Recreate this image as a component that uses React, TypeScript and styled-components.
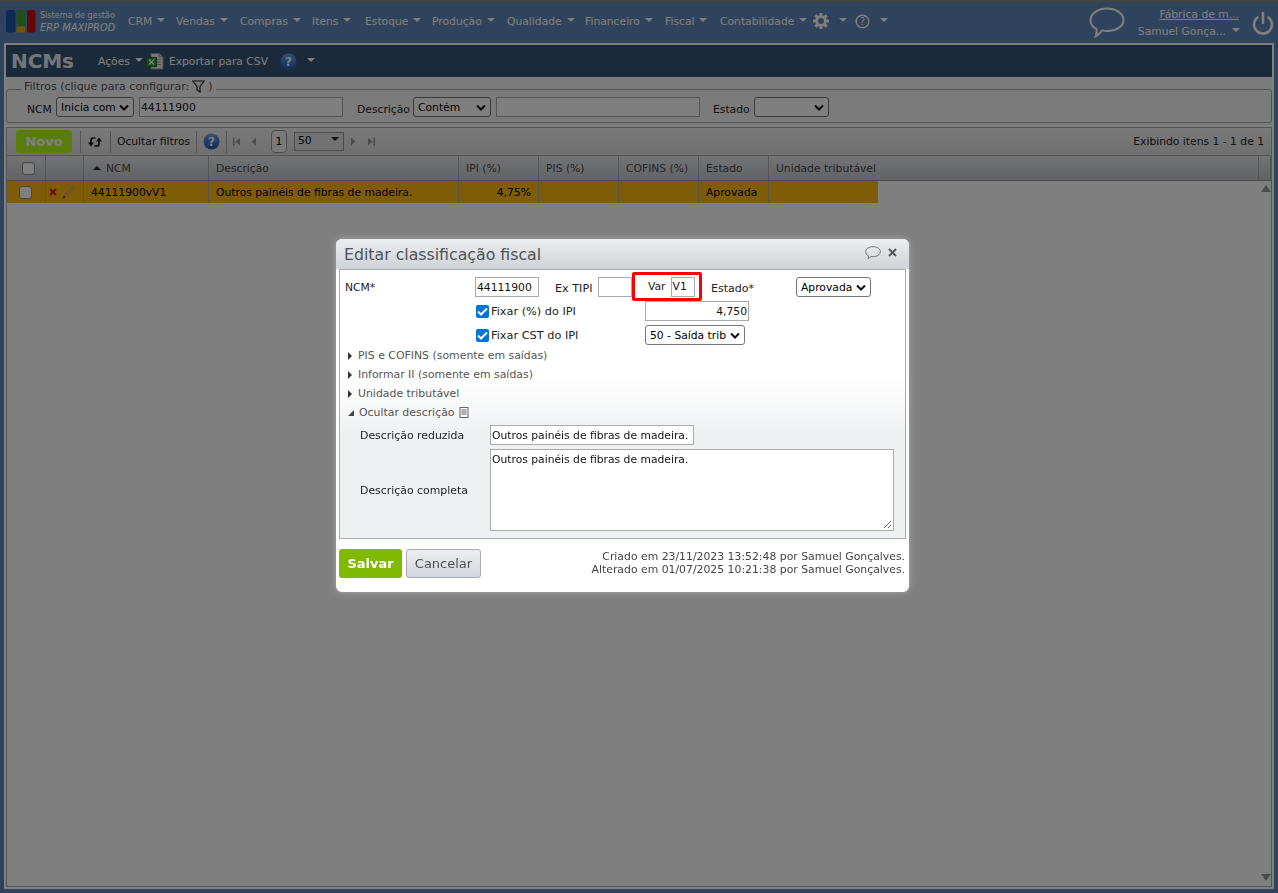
import React from "react";
import styled, { createGlobalStyle } from "styled-components";

const font = `"DejaVu Sans", Verdana, sans-serif`;

const Global = createGlobalStyle`
  html, body { margin: 0; padding: 0; height: 100%; background: #5e86b6; }
  #root { height: 100%; }
  * { box-sizing: border-box; }
  body { font-family: ${font}; font-size: 10.75px; color: #000; overflow: hidden; }
`;

const Page = styled.div`
  width: 1278px; height: 893px; display: flex; flex-direction: column;
  background: #5e88b8; border-top: 2px solid #888;
`;

const TopBar = styled.header`
  height: 41px; flex: none; display: flex; align-items: center; padding: 0 4px 0 6px; color: #fff;
`;
const Brand = styled.div`
  width: 122px; flex: none; display: flex; align-items: center; gap: 4px; margin-top: -2px;
`;
const BrandText = styled.div`
  display: flex; flex-direction: column; font-size: 8.05px; line-height: 12px; color: #fff;
  white-space: nowrap; font-weight: 400;
  b { font-style: italic; font-weight: 400; font-size: 9.9px; }
`;
const Nav = styled.nav`
  display: flex; align-items: center; height: 100%; font-size: 10.75px; margin-top: -3px;
`;
const NavItem = styled.span<{ $w: number }>`
  width: ${(p) => p.$w}px; display: flex; align-items: center; gap: 5px; white-space: nowrap; flex: none;
  svg { flex: none; }
`;
const Caret = styled.i<{ $c?: string; $s?: number }>`
  display: inline-block; width: 0; height: 0; flex: none; margin-top: -3px;
  border-left: ${(p) => p.$s ?? 4.5}px solid transparent; border-right: ${(p) => p.$s ?? 4.5}px solid transparent;
  border-top: ${(p) => p.$s ?? 4.5}px solid ${(p) => p.$c ?? "#fff"};
`;
const TopRight = styled.div`
  margin-left: auto; display: flex; align-items: center;
`;
const UserBox = styled.div`
  width: 106px; display: flex; flex-direction: column; align-items: flex-end; line-height: 17px;
  font-size: 10.75px; margin: 1px 12px 0 -5px; white-space: nowrap;
  u { margin-right: 1px; }
  span { display: flex; align-items: center; gap: 6px; }
`;

const Panel = styled.main`
  flex: 1; margin: 0 4px 4px; border: 2px solid #fff; background: #fff;
  display: flex; flex-direction: column; min-height: 0;
`;
const TitleBar = styled.div`
  height: 32px; flex: none; background: #365576; display: flex; align-items: center; color: #fff; padding-left: 5px;
`;
const PageTitle = styled.h1`
  margin: 0; font-family: "DejaVu Sans", sans-serif; font-size: 20px; font-weight: 700; width: 87px; letter-spacing: -.1px;
  color: #e8eef5; white-space: nowrap;
`;
const TitleAction = styled.span`
  display: flex; align-items: center; gap: 5px; white-space: nowrap; font-size: 10.75px; margin-right: 5px;
`;

const Filters = styled.fieldset`
  margin: 0; padding: 0 0 7px 21px; border: 0; flex: none; height: 48px; background: #f6f6f6; position: relative;
  display: flex; align-items: flex-start;
  &::before { content: ""; position: absolute; left: 0; right: 0; top: 12px; bottom: 1px; border: 1px solid #aaa; border-radius: 3px; }
`;
const FilterLegend = styled.div`
  position: absolute; left: 15px; top: 3px; background: #f6f6f6; padding: 0 3px; display: flex; align-items: center;
  gap: 3px; color: #555; font-size: 11px; white-space: nowrap;
`;
const FilterRow = styled.div`
  display: flex; align-items: center; position: relative; margin-top: 20px; height: 20px;
`;
const FLabel = styled.span<{ $w: number }>`
  width: ${(p) => p.$w}px; flex: none; padding-top: 4px; color: #222; white-space: nowrap;
`;
const Sel = styled.div<{ $w: number; $ml?: number }>`
  width: ${(p) => p.$w}px; margin-left: ${(p) => p.$ml ?? 0}px; height: 20px; flex: none;
  background: #fff; border: 1px solid #767676; border-radius: 3px; display: flex; align-items: center;
  padding: 0 4px; font-size: 10.75px; color: #000; justify-content: space-between; white-space: nowrap; overflow: hidden;
`;
const TextBox = styled.div<{ $w: number; $ml?: number; $right?: boolean }>`
  width: ${(p) => p.$w}px; margin-left: ${(p) => p.$ml ?? 0}px; height: 20px; flex: none;
  background: #fff; border: 1px solid #aaa; padding: 0 1px; display: flex; align-items: center; white-space: nowrap;
  font-size: 10.75px; color: #111; justify-content: ${(p) => (p.$right ? "flex-end" : "flex-start")};
`;

const Toolbar = styled.div`
  height: 28px; flex: none; margin-top: 2px; background: linear-gradient(#f4f4f4, #dfdfdf); border: 1px solid #aaa; border-bottom: 0;
  display: flex; align-items: center; position: relative; padding-left: 9px;
`;
const Novo = styled.div`
  width: 56px; height: 23px; border-radius: 3px; background: #b5f81a; color: #fff; font-weight: 700; font-size: 13px;
  display: flex; align-items: center; justify-content: center; margin-right: 8px; flex: none;
`;
const ToolCell = styled.div<{ $w: number }>`
  width: ${(p) => p.$w}px; flex: none; height: 22px; border-left: 1px solid #aaa;
  display: flex; align-items: center; justify-content: center; white-space: nowrap; color: #222;
`;
const PagerStart = styled(ToolCell)`
  justify-content: flex-start; padding-left: 6px; margin-right: 5px;
`;
const PageBox = styled.div`
  width: 16px; height: 23px; border: 1px solid #999; border-radius: 4px; background: #f4f4f4; display: flex; align-items: center; justify-content: center; flex: none; margin: 0 7px 0 14px;
`;
const SizeBox = styled.div`
  width: 50px; height: 19px; border: 1px solid #999; background: #e4e4e4; display: flex; align-items: center; justify-content: space-between; padding: 0 4px 2px 3px; flex: none; margin-right: 6px;
`;
const PagerGap = styled.span`
  width: 9px; flex: none;
`;
const Showing = styled.span`
  margin-left: auto; margin-right: 7px; color: #222;
`;

const Grid = styled.section`
  flex: 1; min-height: 0; display: flex; flex-direction: column; border: 1px solid #aaa; border-top: 0; position: relative;
`;
const HeadRow = styled.div`
  height: 26px; flex: none; display: flex; background: linear-gradient(#e6e7e9, #c4c6ca); border-top: 1px solid #aaa; border-bottom: 1px solid #999;
`;
const Cell = styled.div<{ $w: number; $right?: boolean }>`
  width: ${(p) => p.$w}px; flex: none; border-right: 1px solid #aaa; display: flex; align-items: center; gap: 5px;
  padding: 0 7px; white-space: nowrap; justify-content: ${(p) => (p.$right ? "flex-end" : "flex-start")};
`;
const CheckHead = styled(Cell)`
  justify-content: center; padding-left: 11px;
`;
const CheckCell = styled(Cell)`
  justify-content: center; padding-right: 9px;
`;
const ActionCell = styled(Cell)`
  padding: 0 0 0 3px;
`;
const SortCell = styled(Cell)`
  padding-left: 9px;
`;
const HeadText = styled.span`
  color: #4a4a4a;
`;
const Spacer = styled.div`
  flex: 1; border-right: 1px solid #aaa;
`;
const BodyWrap = styled.div`
  flex: 1; display: flex; min-height: 0;
`;
const Body = styled.div`
  flex: 1; background: #fff;
`;
const DataRow = styled.div`
  height: 22px; width: 871px; display: flex; background: #ffb80e;
`;
const Scroll = styled.div`
  width: 14px; flex: none; display: flex; flex-direction: column; justify-content: space-between; align-items: center; padding: 4px 0 5px 4px; background: #fff;
`;
const Box = styled.span<{ $s?: number }>`
  width: ${(p) => p.$s ?? 13}px; height: ${(p) => p.$s ?? 13}px; border: 1px solid #8a8a8a; border-radius: 3px; background: #fff; display: block; flex: none;
`;
const TriUp = styled.i`
  width: 0; height: 0; border-left: 4px solid transparent; border-right: 4px solid transparent; border-bottom: 4px solid #222; display: block; flex: none;
`;
const ScrollUp = styled.i`
  width: 0; height: 0; border-left: 5px solid transparent; border-right: 5px solid transparent; border-bottom: 7px solid #999; display: block;
`;
const ScrollDown = styled.i`
  width: 0; height: 0; border-left: 5px solid transparent; border-right: 5px solid transparent; border-top: 7px solid #999; display: block;
`;

const Overlay = styled.div`
  position: fixed; inset: 0; background: rgba(0, 0, 0, 0.5); z-index: 10;
`;
const Modal = styled.div`
  position: fixed; z-index: 11; left: 336px; top: 239px; width: 573px; height: 353px; background: #fff; border-radius: 6px;
  box-shadow: 0 0 6px rgba(255,255,255,.35); padding: 0 3px; display: flex; flex-direction: column;
`;
const ModalHead = styled.div`
  height: 30px; flex: none; margin: 0 -3px; padding: 0 12px 0 8px; border-radius: 6px 6px 0 0; background: linear-gradient(#eceef0, #cfd2d6);
  display: flex; align-items: center; justify-content: space-between;
  h2 { margin: 0; font-size: 15.75px; font-weight: 400; color: #4e5358; white-space: nowrap; }
  span { display: flex; align-items: center; gap: 7px; margin-top: -3px; }
`;
const FormBox = styled.div`
  height: 270px; flex: none; border: 1px solid #a9adb3; background: linear-gradient(#fff 40%, #eff0f2 62%); padding: 7px 5px 0;
  display: flex; flex-direction: column;
`;
const FormRow = styled.div<{ $h: number; $mt?: number }>`
  display: flex; align-items: center; height: ${(p) => p.$h}px; margin-top: ${(p) => p.$mt ?? 0}px; flex: none; color: #222;
`;
const RowLabel = styled.span<{ $w?: number; $ml?: number; $pt?: number; $fs?: number }>`
  ${(p) => (p.$w ? `width: ${p.$w}px; flex: none;` : "")} margin-left: ${(p) => p.$ml ?? 0}px; padding-top: ${(p) => p.$pt ?? 0}px; white-space: nowrap;
  font-size: ${(p) => p.$fs ?? 10.75}px;
`;
const RedBox = styled.div`
  width: 70px; height: 29px; margin: -1px 0 0 0; flex: none; border: 3px solid #f00; border-radius: 2px; display: flex; align-items: center; padding-left: 13px; gap: 5px; background: #fff;
`;
const Check = styled.span`
  width: 13px; height: 13px; background: #0075d9; border-radius: 2px; display: flex; align-items: center; justify-content: center; flex: none; margin: 0 2px 0 131px;
`;
const Toggle = styled.div<{ $mt?: number }>`
  height: 19px; flex: none; margin-top: ${(p) => p.$mt ?? 0}px; display: flex; align-items: center; color: #555; gap: 6px; padding-left: 3px; white-space: nowrap; font-size: 10.9px;
`;
const TriR = styled.i`
  width: 0; height: 0; border-top: 4px solid transparent; border-bottom: 4px solid transparent; border-left: 4px solid #333; display: block; flex: none;
`;
const TriD = styled.i`
  width: 0; height: 0; border-bottom: 6px solid #444; border-left: 6px solid transparent; display: block; flex: none; margin-right: -1px;
`;
const DescRow = styled.div<{ $h: number; $mt: number }>`
  display: flex; align-items: center; height: ${(p) => p.$h}px; margin-top: ${(p) => p.$mt}px; padding-left: 15px; color: #222; flex: none;
  > span:first-child { width: 130px; flex: none; font-size: 10.9px; }
`;
const TextArea = styled.div`
  width: 404px; height: 82px; border: 1px solid #aaa; background: #fff; padding: 3px 1px; font-size: 10.75px; color: #111; position: relative;
  svg { position: absolute; right: 1px; bottom: 1px; }
`;
const Footer = styled.div`
  flex: 1; display: flex; align-items: flex-start; padding-top: 10px; justify-content: space-between;
`;
const Actions = styled.div`
  display: flex; gap: 4px;
`;
const SaveBtn = styled.div`
  width: 63px; height: 29px; background: #7fba00; border-radius: 3px; color: #fff; font-weight: 700; font-size: 13px;
  display: flex; align-items: center; justify-content: center;
`;
const CancelBtn = styled.div`
  width: 75px; height: 29px; background: linear-gradient(#eceef0, #d3d6da); border: 1px solid #a9adb3; border-radius: 3px; color: #4e5358; font-size: 13px;
  display: flex; align-items: center; justify-content: center;
`;
const Audit = styled.div`
  text-align: right; line-height: 13px; color: #444; padding: 1px 1px 0 0; white-space: nowrap; font-size: 10.85px;
`;

const Chevron = () => (
  <svg width="10" height="7" viewBox="0 0 10 7" style={{ flex: "none" }}><path d="M1 1.500 5 5.500 9 1.500" fill="none" stroke="#111" strokeWidth="2" /></svg>
);
const Logo = () => (
  <svg width="30" height="23" viewBox="0 0 30 23" style={{ flex: "none" }}>
    <rect x="0" y="0" width="9.500" height="22.500" rx="2" fill="#1c54a4" />
    <rect x="10.500" y="0" width="9" height="15.500" rx="2" fill="#3ea02e" />
    <rect x="10.500" y="16.500" width="9" height="6" rx="1.500" fill="#e8a800" />
    <rect x="21" y="0" width="8.500" height="22.500" rx="2" fill="#cc0c0c" />
  </svg>
);
const Bubble = ({ s, c }: { s: number; c: string }) => (
  <svg width={s} height={(s * 31) / 36} viewBox="0 0 36 31" fill="none" stroke={c} strokeWidth="2">
    <path d="M18 1.500C27 1.500 34.500 6.500 34.500 13S27 24 18 24c-2 0-3.500-.2-5-.6C11 26 9 28.500 6.500 29.500 7.500 27 8 24.500 7.500 22 3.500 20 1.500 16.500 1.500 13 1.500 6.500 9 1.500 18 1.500Z" />
  </svg>
);
const Gear = () => (
  <svg width="16" height="16" viewBox="0 0 16 16">
    <g fill="#fff">
      <circle cx="8" cy="8" r="5.800" />
      {[0, 45, 90, 135, 180, 225, 270, 315].map((a) => (
        <rect key={a} x="6.500" y="0" width="3" height="4" transform={`rotate(${a} 8 8)`} />
      ))}
    </g>
    <circle cx="8" cy="8" r="3" fill="#5e88b8" />
  </svg>
);
const HelpRing = () => (
  <svg width="15" height="15" viewBox="0 0 15 15">
    <circle cx="7.500" cy="7.500" r="6.300" fill="none" stroke="#fff" strokeWidth="1.400" />
    <text x="7.500" y="11" textAnchor="middle" fontSize="10" fill="#fff" fontFamily="DejaVu Sans">?</text>
  </svg>
);
const Power = () => (
  <svg width="22" height="24" viewBox="0 0 22 24" fill="none" stroke="#fff" strokeWidth="2.600" strokeLinecap="round">
    <path d="M11 2v10" />
    <path d="M5.500 6.500a9 9 0 1 0 11 0" />
  </svg>
);
const HelpBall = () => (
  <svg width="17" height="17" viewBox="0 0 17 17" style={{ flex: "none" }}>
    <defs><linearGradient id="hb" x1="0" y1="0" x2="0" y2="1"><stop offset="0" stopColor="#6ea2e8" /><stop offset="1" stopColor="#1d57b0" /></linearGradient></defs>
    <circle cx="8.500" cy="8.500" r="8" fill="url(#hb)" />
    <text x="8.500" y="13" textAnchor="middle" fontSize="12" fontWeight="700" fill="#fff" fontFamily="DejaVu Sans">?</text>
  </svg>
);
const Excel = () => (
  <svg width="18" height="17" viewBox="0 0 18 17" style={{ flex: "none", marginLeft: -2 }}>
    <path d="M5 .5h8l4 3.500v12H5Z" fill="#eee" stroke="#999" />
    <path d="M13 .5V4h4" fill="#ccc" stroke="#999" />
    <path d="M11 6.500h4M11 9h4M11 11.500h4" stroke="#999" />
    <rect x="0.500" y="4.500" width="10" height="9" fill="#2f9a3c" stroke="#1d6b28" />
    <path d="M3 6.500 8 11.500M8 6.500 3 11.500" stroke="#fff" strokeWidth="1.300" />
  </svg>
);
const Funnel = () => (
  <svg width="13" height="13" viewBox="0 0 13 13" fill="none" stroke="#222" strokeWidth="1.200">
    <path d="M.8 1h11.400L8 6.500V12L5 10V6.500Z" />
  </svg>
);
const Refresh = () => (
  <svg width="14" height="12" viewBox="0 0 14 12" style={{ marginRight: 1 }}>
    <path d="M7.500 2H5C3.500 2 3 3 3 4.500V7" fill="none" stroke="#111" strokeWidth="1.700" />
    <path d="M0 6.500h6L3 10.500Z" fill="#111" />
    <path d="M6.500 10H9c1.500 0 2-1 2-2.500V5" fill="none" stroke="#111" strokeWidth="1.700" />
    <path d="M8 5.500h6L11 1.500Z" fill="#111" />
  </svg>
);
const PagerIcon = ({ dir, bar }: { dir: "l" | "r"; bar?: boolean }) => (
  <svg width="8" height="9" viewBox="0 0 8 9" style={{ flex: "none" }}>
    {dir === "l" ? <path d="M7 .5v8L2.500 4.500Z" fill="#999" /> : <path d="M1 .5v8L5.500 4.500Z" fill="#999" />}
    {bar && (dir === "l" ? <rect x="0" y=".5" width="1.500" height="8" fill="#999" /> : <rect x="6.500" y=".5" width="1.500" height="8" fill="#999" />)}
  </svg>
);
const DeleteX = () => (
  <svg width="8" height="8" viewBox="0 0 8 8" stroke="#d81818" strokeWidth="2" style={{ flex: "none" }}><path d="M1 1 7 7M7 1 1 7" /></svg>
);
const Pencil = () => (
  <svg width="14" height="14" viewBox="0 0 14 14" style={{ flex: "none" }}>
    <path d="M11.500 .8 13.200 2.500 3.500 12 .8 13.200 2 10.500Z" fill="#f2b070" stroke="#c88448" strokeWidth=".6" />
    <path d="M.8 13.200 2 10.500 3.500 12Z" fill="#333" />
  </svg>
);
const Note = () => (
  <svg width="10" height="11" viewBox="0 0 10 11" fill="none" stroke="#666" strokeWidth="1" style={{ marginLeft: -1 }}>
    <rect x="1" y=".5" width="8" height="10" /><path d="M2.500 3h5M2.500 5h5M2.500 7h5" />
  </svg>
);
const Tick = () => (
  <svg width="11" height="9" viewBox="0 0 11 9" fill="none" stroke="#fff" strokeWidth="2"><path d="M1 4.500 4 7.500 10 1.500" /></svg>
);
const CloseX = () => (
  <svg width="9" height="9" viewBox="0 0 9 9" stroke="#555" strokeWidth="2"><path d="M1 1 8 8M8 1 1 8" /></svg>
);
const Grip = () => (
  <svg width="10" height="10" viewBox="0 0 10 10" stroke="#666" strokeWidth="1"><path d="M9 2 2 9M9 6 6 9" /></svg>
);

const menu: [string, number][] = [
  ["CRM", 48], ["Vendas", 64], ["Compras", 72], ["Itens", 53], ["Estoque", 67], ["Produção", 75],
  ["Qualidade", 78], ["Financeiro", 80], ["Fiscal", 55], ["Contabilidade", 93],
];
const cols = [39, 38, 125, 250, 80, 80, 80, 70, 110];

export default function App() {
  return (
    <>
      <Global />
      <Page>
        <TopBar>
          <Brand>
            <Logo />
            <BrandText>
              <span>Sistema de gestão</span>
              <b>ERP MAXIPROD</b>
            </BrandText>
          </Brand>
          <Nav>
            {menu.map(([t, w]) => (
              <NavItem key={t} $w={w}>{t}<Caret /></NavItem>
            ))}
            <NavItem $w={42}><Gear /><span /><Caret /></NavItem>
            <NavItem $w={42}><HelpRing /><span /><Caret /></NavItem>
          </Nav>
          <TopRight>
            <Bubble s={36} c="#fff" />
            <span style={{ width: 14 }} />
            <UserBox>
              <u>Fábrica de m...</u>
              <span>Samuel Gonça...<Caret /></span>
            </UserBox>
            <Power />
          </TopRight>
        </TopBar>
        <Panel>
          <TitleBar>
            <PageTitle>NCMs</PageTitle>
            <TitleAction>Ações <Caret /></TitleAction>
            <TitleAction><Excel />Exportar para CSV</TitleAction>
            <span style={{ width: 7 }} />
            <TitleAction><HelpBall /><span /><Caret /></TitleAction>
          </TitleBar>
          <Filters>
            <FilterLegend>Filtros (clique para configurar: <Funnel />)</FilterLegend>
            <FilterRow>
              <FLabel $w={29}>NCM</FLabel>
              <Sel $w={78}>Inicia com<Chevron /></Sel>
              <TextBox $w={204} $ml={5}>44111900</TextBox>
              <FLabel $w={56} style={{ marginLeft: 14 }}>Descrição</FLabel>
              <Sel $w={78}>Contém<Chevron /></Sel>
              <TextBox $w={204} $ml={5} />
              <FLabel $w={41} style={{ marginLeft: 13 }}>Estado</FLabel>
              <Sel $w={75}><span /><Chevron /></Sel>
            </FilterRow>
          </Filters>
          <Toolbar>
            <Novo>Novo</Novo>
            <ToolCell $w={30}><Refresh /></ToolCell>
            <ToolCell $w={86}>Ocultar filtros</ToolCell>
            <ToolCell $w={30}><HelpBall /></ToolCell>
            <PagerStart $w={18}><PagerIcon dir="l" bar /></PagerStart>
            <PagerIcon dir="l" />
            <PageBox>1</PageBox>
            <SizeBox>50<Caret $c="#222" /></SizeBox>
            <PagerIcon dir="r" />
            <PagerGap />
            <PagerIcon dir="r" bar />
            <Showing>Exibindo itens 1 - 1 de 1</Showing>
          </Toolbar>
          <Grid>
            <HeadRow>
              <CheckHead $w={cols[0]}><Box /></CheckHead>
              <Cell $w={cols[1]} />
              <SortCell $w={cols[2]}><TriUp /><HeadText>NCM</HeadText></SortCell>
              <Cell $w={cols[3]}><HeadText>Descrição</HeadText></Cell>
              <Cell $w={cols[4]}><HeadText>IPI (%)</HeadText></Cell>
              <Cell $w={cols[5]}><HeadText>PIS (%)</HeadText></Cell>
              <Cell $w={cols[6]}><HeadText>COFINS (%)</HeadText></Cell>
              <Cell $w={cols[7]}><HeadText>Estado</HeadText></Cell>
              <Cell $w={cols[8] + 380}><HeadText>Unidade tributável</HeadText></Cell>
              <Spacer />
            </HeadRow>
            <BodyWrap>
              <Body>
                <DataRow>
                  <CheckCell $w={cols[0]}><Box /></CheckCell>
                  <ActionCell $w={cols[1]}><DeleteX /><Pencil /></ActionCell>
                  <Cell $w={cols[2]}>44111900vV1</Cell>
                  <Cell $w={cols[3]}>Outros painéis de fibras de madeira.</Cell>
                  <Cell $w={cols[4]} $right>4,75%</Cell>
                  <Cell $w={cols[5]} />
                  <Cell $w={cols[6]} />
                  <Cell $w={cols[7]}>Aprovada</Cell>
                </DataRow>
              </Body>
              <Scroll><ScrollUp /><ScrollDown /></Scroll>
            </BodyWrap>
          </Grid>
        </Panel>
      </Page>
      <Overlay />
      <Modal>
        <ModalHead>
          <h2>Editar classificação fiscal</h2>
          <span><Bubble s={16} c="#666" /><CloseX /></span>
        </ModalHead>
        <FormBox>
          <FormRow $h={20}>
            <RowLabel $w={130}>NCM*</RowLabel>
            <TextBox $w={64}>44111900</TextBox>
            <RowLabel $w={43} $ml={16} $pt={2} $fs={11.2}>Ex TIPI</RowLabel>
            <TextBox $w={34} />
            <RedBox>Var<TextBox $w={24}>V1</TextBox></RedBox>
            <RowLabel $w={85} $ml={9} $pt={3} $fs={11}>Estado*</RowLabel>
            <Sel $w={75}>Aprovada<Chevron /></Sel>
          </FormRow>
          <FormRow $h={20} $mt={4}>
            <Check><Tick /></Check>
            <RowLabel $w={154} $fs={11.3}>Fixar (%) do IPI</RowLabel>
            <TextBox $w={104} $right>4,750</TextBox>
          </FormRow>
          <FormRow $h={20} $mt={4}>
            <Check><Tick /></Check>
            <RowLabel $w={154} $fs={11.3}>Fixar CST do IPI</RowLabel>
            <Sel $w={100}>50 - Saída trib<Chevron /></Sel>
          </FormRow>
          <Toggle $mt={1}><TriR />PIS e COFINS (somente em saídas)</Toggle>
          <Toggle><TriR />Informar II (somente em saídas)</Toggle>
          <Toggle><TriR />Unidade tributável</Toggle>
          <Toggle><TriD />Ocultar descrição <Note /></Toggle>
          <DescRow $h={20} $mt={3}>
            <span>Descrição reduzida</span>
            <TextBox $w={204}>Outros painéis de fibras de madeira.</TextBox>
          </DescRow>
          <DescRow $h={82} $mt={4}>
            <span>Descrição completa</span>
            <TextArea>Outros painéis de fibras de madeira.<Grip /></TextArea>
          </DescRow>
        </FormBox>
        <Footer>
          <Actions>
            <SaveBtn>Salvar</SaveBtn>
            <CancelBtn>Cancelar</CancelBtn>
          </Actions>
          <Audit>
            Criado em 23/11/2023 13:52:48 por Samuel Gonçalves.<br />
            Alterado em 01/07/2025 10:21:38 por Samuel Gonçalves.
          </Audit>
        </Footer>
      </Modal>
    </>
  );
}
